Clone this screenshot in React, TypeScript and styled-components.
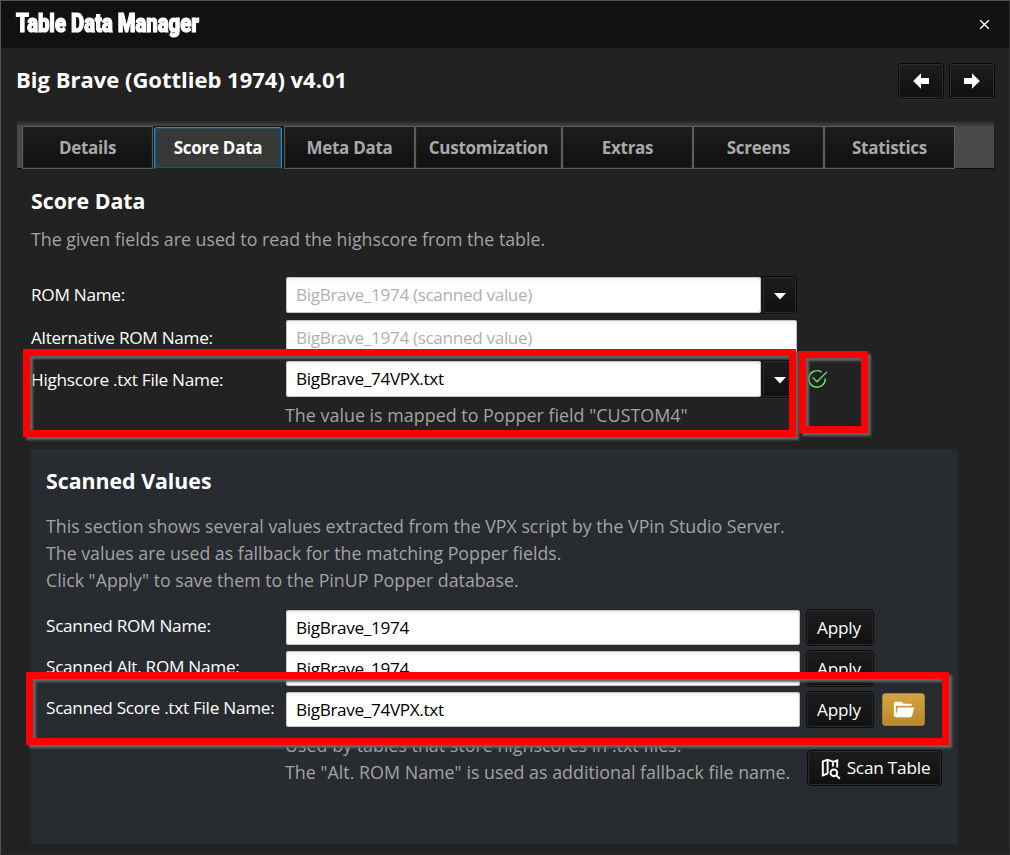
import React from "react";
import styled, { createGlobalStyle, css } from "styled-components";
import { BsCheck2Circle } from "react-icons/bs";

const GlobalStyle = createGlobalStyle`
  * { box-sizing: border-box; }
  body { margin: 0; background: #222; font-family: "Open Sans", "Noto Sans", sans-serif; }
`;

const face = css`
  background: linear-gradient(#1d1d1d, #101010);
  border: 1px solid #0b0b0b;
  box-shadow: inset 0 0 0 1px #2c2c2c, 0 1px 0 #303030;
`;

const Window = styled.div`
  position: relative;
  width: 1010px;
  height: 855px;
  overflow: hidden;
  background: #222;
  border: 1px solid #555;
  border-right-color: #2f2f2f;
  border-bottom-color: #2a2a2a;
  color: #fff;
  font-size: 17.2px;
`;

const TitleBar = styled.header`
  display: flex;
  align-items: center;
  justify-content: space-between;
  height: 47px;
  padding: 0 19px 2px 15px;
  background: #111;

  svg {
    margin-top: 2px;
  }
`;

const Title = styled.div`
  font: 900 25px/30px Roboto, sans-serif;
  letter-spacing: 0;
  white-space: nowrap;
  -webkit-text-stroke: 1.2px #fff;
  transform: scaleX(0.812);
  transform-origin: 0 50%;
`;

const GameBar = styled.div`
  display: flex;
  align-items: center;
  height: 73px;
  padding: 0 14px 8px 15px;
  gap: 5px;
`;

const GameName = styled.h1`
  flex: 1;
  margin: 0;
  padding-bottom: 3px;
  font-size: 22px;
  line-height: 30px;
  font-weight: 700;
`;

const NavButton = styled.button`
  ${face}
  display: grid;
  place-items: center;
  width: 46px;
  height: 36px;
  padding: 0;
  border-radius: 3px;
  color: #fff;
`;

const TabStrip = styled.nav`
  display: flex;
  height: 48px;
  margin: 0 15px 0 16px;
  padding: 5px 0 0 5px;
  background: linear-gradient(#262626, #4a4a4a 6px);
  border-bottom: 1px solid #0c0c0c;
`;

const Tab = styled.button<{ $width: number; $active?: boolean }>`
  width: ${(p) => p.$width}px;
  height: 43px;
  padding: 0;
  border: 1px solid #5c5c5c;
  background: linear-gradient(#1d1d1d, #101010);
  box-shadow: inset 0 0 1px 1px #222;
  color: #a9a9a9;
  font: 700 17px/24px "Open Sans", sans-serif;
  letter-spacing: -0.28px;
  ${(p) =>
    p.$active &&
    css`
      padding: 1px 2px 0 1px;
      border: 0;
      background: #151515;
      box-shadow: none;
      color: #fff;
    `}
`;

const ActiveFace = styled.span`
  display: grid;
  place-items: center;
  height: 42px;
  background: #383838;
  border: 1px solid #009fd8;
  border-bottom-color: #13252c;
  border-radius: 3px 3px 0 0;
  box-shadow: inset 0 0 1px 1px #245263;
`;

const Section = styled.main`
  padding: 17px 51px 0 30px;
`;

const Heading = styled.h2`
  margin: 0;
  font-size: 21.3px;
  line-height: 30px;
  font-weight: 700;
`;

const Paragraph = styled.p`
  margin: 0;
  color: #a3a3a3;
  font-size: 17.8px;
  line-height: 27px;
  white-space: nowrap;
`;

const Intro = styled(Paragraph)`
  margin: 10px 0 24px;
`;

const ScanIntro = styled(Paragraph)`
  margin: 17px 0 16px;
  font-size: 17.75px;
`;

const Row = styled.div<{ $height: number }>`
  display: flex;
  align-items: flex-start;
  height: ${(p) => p.$height}px;
`;

const Label = styled.label<{ $width: number; $line?: number }>`
  flex: none;
  width: ${(p) => p.$width}px;
  line-height: ${(p) => p.$line ?? 36}px;
  letter-spacing: -0.28px;
  white-space: nowrap;
`;

const Field = styled.div<{ $width: number; $height?: number; $prompt?: boolean }>`
  flex: none;
  width: ${(p) => p.$width}px;
  height: ${(p) => p.$height ?? 36}px;
  padding-left: 10px;
  line-height: ${(p) => p.$height ?? 35}px;
  letter-spacing: -0.36px;
  border-radius: 3px;
  background: linear-gradient(#eee, #fff 5px);
  box-shadow: inset 0 0 0 1px #c4c4c4;
  color: ${(p) => (p.$prompt ? "#b0b0b0" : "#000")};
`;

const DropButton = styled.button`
  ${face}
  display: grid;
  place-items: center;
  width: 35px;
  height: 38px;
  margin: -1px 0 0 1px;
  padding: 1px 0 0;
  border-radius: 0 3px 3px 0;
  color: #fff;
`;

const CheckMark = styled.span`
  display: flex;
  margin: 7px 0 0 9px;
  color: #5fee66;
`;

const MappingNote = styled(Paragraph)`
  padding-left: 254px;
  font-size: 17.9px;
`;

const ScanPanel = styled.section`
  height: 395px;
  margin-top: 20px;
  padding: 17px 0 0 15px;
  background: #282b30;
`;

const ActionButton = styled.button<{ $width: number }>`
  ${face}
  display: flex;
  flex: none;
  align-items: center;
  justify-content: center;
  gap: 5px;
  width: ${(p) => p.$width}px;
  height: 37px;
  padding: 0;
  border-radius: 4px;
  color: #fff;
  font: 17.2px/24px "Open Sans", sans-serif;
  letter-spacing: -0.2px;
`;

const ApplyButton = styled(ActionButton)`
  margin: -1px 0 0 6px;
  padding-right: 2px;
`;

const ScanButton = styled(ActionButton)`
  margin-top: 18px;
  height: 36px;
  padding: 0;
`;

const FolderButton = styled.button`
  display: grid;
  place-items: center;
  width: 43px;
  height: 33px;
  margin: 1px 0 0 8px;
  padding: 0;
  border: 1px solid #a97f2d;
  border-radius: 3px;
  background: linear-gradient(#d3a443, #b98a2c);
  color: #fff;
`;

const Hint = styled.div`
  display: flex;
  align-items: flex-start;
  margin-top: -1px;
`;

const HintText = styled(Paragraph)`
  width: 761px;
  padding-left: 239px;
  font-size: 17.87px;
`;

const Marker = styled.div<{ $x: number; $y: number; $w: number; $h: number }>`
  position: absolute;
  left: ${(p) => p.$x - 1}px;
  top: ${(p) => p.$y - 1}px;
  width: ${(p) => p.$w}px;
  height: ${(p) => p.$h}px;
  border: 7px solid #f00;
  filter: drop-shadow(3.5px 3.5px 1px #626464);
  pointer-events: none;
`;

const Arrow = ({ flip }: { flip?: boolean }) => (
  <svg width="24" height="24" viewBox="0 0 24 24" fill="currentColor">
    <path
      transform={flip ? "translate(24 0) scale(-1 1)" : undefined}
      d="M20 9v6h-8v4.84L4.16 12 12 4.16V9z"
    />
  </svg>
);

const Caret = () => (
  <svg width="14" height="8" viewBox="0 0 14 8" fill="currentColor">
    <path d="M1 1h12L7 7.5z" />
  </svg>
);

const CloseIcon = () => (
  <svg width="11" height="11" viewBox="0 0 11 11" stroke="#fff" strokeWidth="1.4">
    <path d="M1.2 1.2l8.6 8.6M9.8 1.2L1.2 9.8" />
  </svg>
);

const FolderIcon = () => (
  <svg width="23" height="23" viewBox="0 0 24 24" fill="currentColor">
    <path d="M19 20H4a2 2 0 0 1-2-2V6c0-1.11.89-2 2-2h6l2 2h7a2 2 0 0 1 2 2H4v10l2.14-8h17.07l-2.28 8.5c-.23.87-1.01 1.5-1.93 1.5z" />
  </svg>
);

const MapSearchIcon = () => (
  <svg width="23" height="23" viewBox="0 0 24 24" fill="none" stroke="currentColor" strokeWidth="2">
    <path d="M9 17.200l-5 1.900V4.600L9 3l6 2 4-1.500V11M9 3v14.200M14.500 5v5" />
    <circle cx="15.500" cy="16.500" r="3.500" />
    <path d="M18 19l3.700 3.700" />
  </svg>
);

const tabs = [
  { name: "Details", width: 131 },
  { name: "Score Data", width: 131, active: true },
  { name: "Meta Data", width: 131 },
  { name: "Customization", width: 147 },
  { name: "Extras", width: 131 },
  { name: "Screens", width: 131 },
  { name: "Statistics", width: 131 },
];

export default function App() {
  return (
    <>
      <GlobalStyle />
      <Window>
        <TitleBar>
          <Title>Table Data Manager</Title>
          <CloseIcon />
        </TitleBar>
        <GameBar>
          <GameName>Big Brave (Gottlieb 1974) v4.01</GameName>
          <NavButton><Arrow /></NavButton>
          <NavButton><Arrow flip /></NavButton>
        </GameBar>
        <TabStrip>
          {tabs.map((t) => (
            <Tab key={t.name} $width={t.width} $active={t.active}>
              {t.active ? <ActiveFace>{t.name}</ActiveFace> : t.name}
            </Tab>
          ))}
        </TabStrip>
        <Section>
          <Heading>Score Data</Heading>
          <Intro>The given fields are used to read the highscore from the table.</Intro>
          <Row $height={43}>
            <Label $width={255}>ROM Name:</Label>
            <Field $width={475} $prompt>BigBrave_1974 (scanned value)</Field>
            <DropButton><Caret /></DropButton>
          </Row>
          <Row $height={41}>
            <Label $width={255}>Alternative ROM Name:</Label>
            <Field $width={511} $prompt>BigBrave_1974 (scanned value)</Field>
          </Row>
          <Row $height={41}>
            <Label $width={255} $line={38}>Highscore .txt File Name:</Label>
            <Field $width={475}>BigBrave_74VPX.txt</Field>
            <DropButton><Caret /></DropButton>
            <CheckMark><BsCheck2Circle size={22} /></CheckMark>
          </Row>
          <MappingNote>The value is mapped to Popper field "CUSTOM4"</MappingNote>
          <ScanPanel>
            <Heading>Scanned Values</Heading>
            <ScanIntro>
              This section shows several values extracted from the VPX script by the VPin Studio Server.
              <br />
              The values are used as fallback for the matching Popper fields.
              <br />
              Click "Apply" to save them to the PinUP Popper database.
            </ScanIntro>
            <Row $height={41}>
              <Label $width={240} $line={31}>Scanned ROM Name:</Label>
              <Field $width={514} $height={35}>BigBrave_1974</Field>
              <ApplyButton $width={68}>Apply</ApplyButton>
            </Row>
            <Row $height={41}>
              <Label $width={240} $line={31}>Scanned Alt. ROM Name:</Label>
              <Field $width={514} $height={35}>BigBrave_1974</Field>
              <ApplyButton $width={68}>Apply</ApplyButton>
            </Row>
            <Row $height={41}>
              <Label $width={240} $line={31}>Scanned Score .txt File Name:</Label>
              <Field $width={514} $height={35}>BigBrave_74VPX.txt</Field>
              <ApplyButton $width={68}>Apply</ApplyButton>
              <FolderButton><FolderIcon /></FolderButton>
            </Row>
            <Hint>
              <HintText>
                Used by tables that store highscores in .txt files.
                <br />
                The "Alt. ROM Name" is used as additional fallback file name.
              </HintText>
              <ScanButton $width={135}>
                <MapSearchIcon />
                Scan Table
              </ScanButton>
            </Hint>
          </ScanPanel>
        </Section>
        <Marker $x={23} $y={349} $w={773} $h={88} />
        <Marker $x={799} $y={351} $w={69} $h={82} />
        <Marker $x={26} $y={672} $w={923} $h={73} />
      </Window>
    </>
  );
}
